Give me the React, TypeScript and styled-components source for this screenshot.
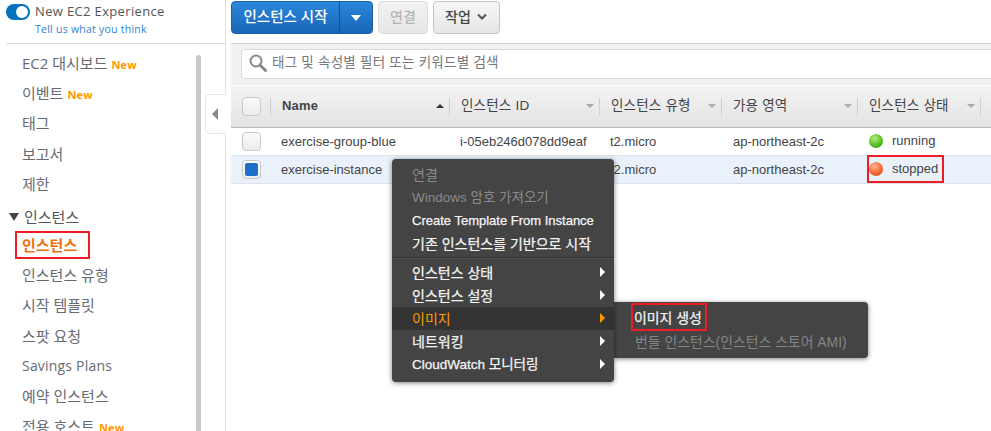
import React from "react";
import styled, { createGlobalStyle } from "styled-components";

const Global = createGlobalStyle`
  html, body { margin: 0; padding: 0; background: #fff; }
  * { box-sizing: border-box; }
`;
const KR = `"Noto Sans CJK KR"`;
const SANS = `"Liberation Sans", ${KR}, sans-serif`;
const NAV = `"Open Sans", ${KR}, sans-serif`;

const Page = styled.div`
  position: relative; width: 991px; height: 431px; overflow: hidden;
  display: flex; background: #fff; font-family: ${SANS};
`;
const Sidebar = styled.aside`
  position: relative; flex: 0 0 226px; height: 431px; border-right: 1px solid #dedede; overflow: hidden;
`;
const ExperienceBox = styled.div`
  margin-left: 6px; height: 44px; border-bottom: 1px solid #dcdcdc;
  display: flex; gap: 5px; padding-top: 4px;
`;
const Toggle = styled.span`
  position: relative; flex: 0 0 24px; width: 24px; height: 16px; border-radius: 8px; background: #0073bb;
  &::after { content: ""; position: absolute; right: 2px; top: 2px; width: 12px; height: 12px; border-radius: 50%; background: #fff; }
`;
const ExperienceText = styled.div`display: flex; flex-direction: column;`;
const ExperienceTitle = styled.span`font: 13px/15px ${NAV}; color: #555; letter-spacing: 0.35px;`;
const FeedbackLink = styled.a`font: 10.5px/14px ${NAV}; color: #2f7fd0; margin-top: 3px; letter-spacing: .25px;`;
const NavList = styled.nav`padding-top: 4px; display: flex; flex-direction: column;`;
const NavItem = styled.div<{ $active?: boolean; $latin?: boolean }>`
  height: 30.2px; padding-left: 22px; display: flex; align-items: center; gap: 4px;
  font: ${p => (p.$active ? 700 : 400)} ${p => (p.$latin ? "14px" : "15px")}/20px ${NAV};
  letter-spacing: ${p => (p.$latin ? ".2px" : "0")};
  color: ${p => (p.$active ? "#ec7211" : "#666b73")};
`;
const NavSection = styled.div`
  height: 26px; margin-top: 5px; padding-left: 9px; display: flex; align-items: center; gap: 5px;
  font: 15px/20px ${NAV}; color: #555;
`;
const SectionArrow = styled.span`
  width: 0; height: 0; border-left: 5px solid transparent; border-right: 5px solid transparent; border-top: 8px solid #444;
`;
const NewTag = styled.span`font: 700 11px/14px ${NAV}; color: #ff9900; margin-top: 3px; letter-spacing: .2px;`;
const ActiveLabel = styled.span`
  margin-left: -6px; padding: 0 12px 0 6px; height: 26px; line-height: 26px;
  outline: 2px solid #ee1c25; outline-offset: -1px;
`;
const ScrollThumb = styled.div`
  position: absolute; left: 196px; top: 55px; width: 5px; height: 390px; border-radius: 3px; background: #c9c9c9;
`;
const CollapseTab = styled.div`
  position: absolute; left: 205px; top: 94px; width: 21px; height: 40px; z-index: 2;
  background: #fff; border: 1px solid #e6e6e6; border-right: none; border-radius: 5px 0 0 5px;
  display: flex; align-items: center; justify-content: center;
  &::after { content: ""; border-top: 6px solid transparent; border-bottom: 6px solid transparent; border-right: 6px solid #888; margin-right: 2px; }
`;

const Main = styled.main`flex: 1; min-width: 0; padding-left: 5px; display: flex; flex-direction: column;`;
const Toolbar = styled.div`height: 43px; padding: 1px 0 0; display: flex; gap: 5px; align-items: flex-start;`;
const SplitButton = styled.div`
  width: 142px; height: 33px; display: flex; border-radius: 4px; border: 1px solid #1a5fa8;
  background: linear-gradient(#2b87da, #1966b8); color: #fff; overflow: hidden;
`;
const SplitLabel = styled.span`
  flex: 1; display: flex; align-items: center; justify-content: center; padding-bottom: 1px;
  font: 500 14.5px/18px ${SANS}; border-right: 1px solid #13508f;
`;
const SplitCaret = styled.span`
  flex: 0 0 32px; display: flex; align-items: center; justify-content: center;
  &::after { content: ""; border-left: 5.5px solid transparent; border-right: 5.5px solid transparent; border-top: 6px solid #fff; }
`;
const ToolButton = styled.div<{ $disabled?: boolean; $w: number }>`
  width: ${p => p.$w}px; height: 33px; border-radius: 4px; border: 1px solid ${p => (p.$disabled ? "#dcdcdc" : "#c4c4c4")};
  background: ${p => (p.$disabled ? "linear-gradient(#f2f2f2,#e6e6e6)" : "linear-gradient(#f7f7f7,#e6e6e6)")};
  color: ${p => (p.$disabled ? "#b5b5b5" : "#444")};
  display: flex; align-items: center; justify-content: center; gap: 5px;
  font: 500 14px/18px ${SANS}; padding-bottom: 1px;
`;
const SearchBand = styled.div`
  height: 42px; background: #f1f1f1; border-top: 1px solid #cfcfcf; padding: 5px 0 0 10px;
`;
const SearchBox = styled.div`
  height: 30px; background: #fff; border: 1px solid #d9d9d9; border-right: none; border-radius: 4px 0 0 4px;
  display: flex; align-items: center; padding: 0 0 2px 6px; gap: 4px;
  font: 13.5px/18px ${SANS}; letter-spacing: .25px; color: #777;
`;
const columns = "40px 179px 150px 122px 136px 123px 10px";
const HeaderRow = styled.div`
  display: grid; grid-template-columns: ${columns}; height: 43px; border-top: 1px solid #fff;
  background: linear-gradient(#f3f3f3, #e3e3e3); border-bottom: 1px solid #b9b9b9;
`;
const HeaderCell = styled.div`
  position: relative; display: flex; align-items: center; justify-content: space-between; padding: 0 6px 2px 11px;
  font: 13.5px/18px ${SANS}; color: #444; letter-spacing: .2px;
  &::after { content: ""; position: absolute; right: 0; top: 12px; height: 18px; border-right: 1px solid #cfcfcf; }
`;
const HeaderName = styled.span<{ $bold?: boolean }>`
  font-weight: ${p => (p.$bold ? 700 : 400)};
  font-size: ${p => (p.$bold ? "13px" : "13.5px")};
`;
const SortCaret = styled.span<{ $up?: boolean }>`
  width: 0; height: 0; border-left: 4px solid transparent; border-right: 4px solid transparent;
  ${p => (p.$up ? "border-bottom: 4px solid #333;" : "border-top: 4px solid #aaa;")}
`;
const CheckCell = styled.div`
  display: flex; align-items: center; padding-left: 11px; position: relative;
  &::after { content: ""; position: absolute; right: 0; top: 12px; height: 18px; border-right: 1px solid #cfcfcf; }
`;
const Check = styled.span<{ $on?: boolean }>`
  position: relative; width: 19px; height: 19px; border: 1px solid #c9c9c9; border-radius: 4px;
  background: linear-gradient(#fafafa, #ececec);
  ${p => p.$on && `&::after { content: ""; position: absolute; inset: 2px; border-radius: 2px; background: #1a6fc9; }`}
`;
const Row = styled.div<{ $selected?: boolean }>`
  display: grid; grid-template-columns: ${columns}; height: 28px; border-bottom: 1px solid #dfe3e8;
  background: ${p => (p.$selected ? "#e9f1fb" : "#fff")};
`;
const RowCheck = styled.div`display: flex; align-items: center; padding-left: 11px;`;
const Cell = styled.div<{ $indent?: number }>`
  display: flex; align-items: center; padding-left: ${p => p.$indent ?? 10}px;
  font: 13px/16px ${SANS}; color: #444;
`;
const StateBox = styled.div<{ $boxed?: boolean }>`
  display: flex; align-items: center; gap: 9px; height: 26px; width: 75px; margin-left: 10px; padding-left: 1px;
  ${p => p.$boxed && "outline: 2px solid #ee1c25; outline-offset: -1px;"}
  font: 13px/16px ${SANS}; color: #444;
`;
const Dot = styled.span<{ $color: "green" | "red" }>`
  width: 14px; height: 14px; border-radius: 50%;
  background: ${p => p.$color === "green"
    ? "radial-gradient(circle at 40% 30%, #b5ef7e, #4dbb1d 60%, #3a9a12)"
    : "radial-gradient(circle at 40% 30%, #ffb48f, #f4602a 60%, #d9431a)"};
`;
const Menu = styled.div`
  position: absolute; left: 392px; top: 159px; width: 222px; height: 223px; z-index: 5;
  background: #444; border-radius: 4px; padding-top: 4px; box-shadow: 0 1px 5px rgba(0,0,0,.5);
`;
const SubMenu = styled.div`
  position: absolute; left: 614px; top: 302px; width: 254px; height: 56px; z-index: 4; padding: 2px 0 0 18px;
  background: #444; border-radius: 0 4px 4px 0; box-shadow: 0 1px 5px rgba(0,0,0,.5);
`;
const MenuItem = styled.div<{ $state?: "disabled" | "hover"; $size?: number }>`
  position: relative; height: 23px; padding-left: 20px; display: flex; align-items: center;
  font: 400 ${p => p.$size ?? 14}px/18px ${SANS};
  color: ${p => (p.$state === "disabled" ? "#8a8a8a" : p.$state === "hover" ? "#ff9900" : "#f4f4f4")};
  ${p => !p.$state && "-webkit-text-stroke: 0.25px #f4f4f4;"}
  ${p => p.$state === "hover" && "background: #333;"}
`;
const MenuArrow = styled.span<{ $hover?: boolean }>`
  position: absolute; right: 9px; top: 6px; border-top: 5px solid transparent; border-bottom: 5px solid transparent;
  border-left: 5px solid ${p => (p.$hover ? "#ff9900" : "#fff")};
`;
const Divider = styled.div`height: 2px; margin: 2px 0 2px; background: #2e2e2e; border-bottom: 1px solid #555;`;
const SubItem = styled.div`
  height: 24px; padding-left: 3px; display: flex; align-items: center; width: fit-content;
  font: 400 13.9px/18px ${SANS}; color: #858585;
`;
const SubHighlight = styled(SubItem)`
  height: 26px; padding: 1px 4px 0 2px; color: #f4f4f4; -webkit-text-stroke: 0.25px #f4f4f4;
  outline: 2px solid #ee1c25; outline-offset: -1px;
`;

const Search = () => (
  <svg width="20" height="20" viewBox="0 0 20 20" fill="none" stroke="#8a8a8a">
    <circle cx="8" cy="8" r="5.5" strokeWidth="2" />
    <path d="M12 12l5.5 5.5" strokeWidth="3" strokeLinecap="round" />
  </svg>
);
const Chevron = () => (
  <svg width="12" height="8" viewBox="0 0 12 8" fill="none" stroke="#555" strokeWidth="2"><path d="M2 1.5l4 4 4-4" /></svg>
);

const nav1 = [["EC2 대시보드", true], ["이벤트", true], ["태그"], ["보고서"], ["제한"]] as const;
const nav2 = [["인스턴스 유형"], ["시작 템플릿"], ["스팟 요청"]] as const;
const nav3 = [["예약 인스턴스"], ["전용 호스트", true]] as const;

export default function App() {
  return (
    <Page>
      <Global />
      <Sidebar>
        <ExperienceBox>
          <Toggle />
          <ExperienceText>
            <ExperienceTitle>New EC2 Experience</ExperienceTitle>
            <FeedbackLink>Tell us what you think</FeedbackLink>
          </ExperienceText>
        </ExperienceBox>
        <NavList>
          {nav1.map(([t, n]) => <NavItem key={t}>{t}{n && <NewTag>New</NewTag>}</NavItem>)}
          <NavSection><SectionArrow />인스턴스</NavSection>
          <NavItem $active><ActiveLabel>인스턴스</ActiveLabel></NavItem>
          {nav2.map(([t]) => <NavItem key={t}>{t}</NavItem>)}
          <NavItem $latin>Savings Plans</NavItem>
          {nav3.map(([t, n]) => <NavItem key={t}>{t}{n && <NewTag>New</NewTag>}</NavItem>)}
        </NavList>
        <ScrollThumb />
      </Sidebar>
      <CollapseTab />
      <Main>
        <Toolbar>
          <SplitButton>
            <SplitLabel>인스턴스 시작</SplitLabel>
            <SplitCaret />
          </SplitButton>
          <ToolButton $disabled $w={50}>연결</ToolButton>
          <ToolButton $w={67}>작업 <Chevron /></ToolButton>
        </Toolbar>
        <SearchBand>
          <SearchBox><Search />태그 및 속성별 필터 또는 키워드별 검색</SearchBox>
        </SearchBand>
        <HeaderRow>
          <CheckCell><Check /></CheckCell>
          <HeaderCell><HeaderName $bold>Name</HeaderName><SortCaret $up /></HeaderCell>
          <HeaderCell><HeaderName>인스턴스 ID</HeaderName><SortCaret /></HeaderCell>
          <HeaderCell><HeaderName>인스턴스 유형</HeaderName><SortCaret /></HeaderCell>
          <HeaderCell><HeaderName>가용 영역</HeaderName><SortCaret /></HeaderCell>
          <HeaderCell><HeaderName>인스턴스 상태</HeaderName><SortCaret /></HeaderCell>
        </HeaderRow>
        <Row>
          <RowCheck><Check /></RowCheck>
          <Cell>exercise-group-blue</Cell>
          <Cell>i-05eb246d078dd9eaf</Cell>
          <Cell>t2.micro</Cell>
          <Cell $indent={11}>ap-northeast-2c</Cell>
          <StateBox><Dot $color="green" />running</StateBox>
        </Row>
        <Row $selected>
          <RowCheck><Check $on /></RowCheck>
          <Cell>exercise-instance</Cell>
          <Cell />
          <Cell>t2.micro</Cell>
          <Cell $indent={11}>ap-northeast-2c</Cell>
          <StateBox $boxed><Dot $color="red" />stopped</StateBox>
        </Row>
      </Main>
      <Menu>
        <MenuItem $state="disabled">연결</MenuItem>
        <MenuItem $state="disabled" $size={13.5}>Windows 암호 가져오기</MenuItem>
        <MenuItem $size={13}>Create Template From Instance</MenuItem>
        <MenuItem>기존 인스턴스를 기반으로 시작</MenuItem>
        <Divider />
        <MenuItem>인스턴스 상태<MenuArrow /></MenuItem>
        <MenuItem>인스턴스 설정<MenuArrow /></MenuItem>
        <MenuItem $state="hover">이미지<MenuArrow $hover /></MenuItem>
        <MenuItem>네트워킹<MenuArrow /></MenuItem>
        <MenuItem $size={13.5}>CloudWatch 모니터링<MenuArrow /></MenuItem>
      </Menu>
      <SubMenu>
        <SubHighlight>이미지 생성</SubHighlight>
        <SubItem>번들 인스턴스(인스턴스 스토어 AMI)</SubItem>
      </SubMenu>
    </Page>
  );
}
